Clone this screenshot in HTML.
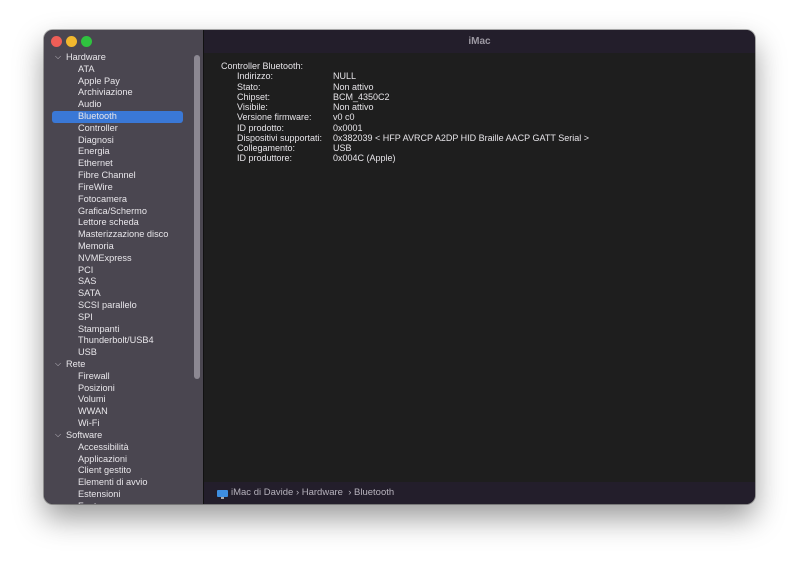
<!DOCTYPE html>
<html><head><meta charset="utf-8"><style>
*{margin:0;padding:0;box-sizing:border-box}
body{width:800px;height:563px;background:#fff;position:relative;overflow:hidden;font-family:"Liberation Sans",sans-serif;}
.win{position:absolute;left:44px;top:30px;width:711px;height:474px;border-radius:9px;overflow:hidden;background:#1e1e1e;box-shadow:0 14px 30px rgba(0,0,0,.4),0 0 0 1px rgba(0,0,0,.3);}
.side{position:absolute;left:0;top:0;width:159px;height:474px;background:#4a4650;}
.title{position:absolute;left:159px;top:0;right:0;height:23px;background:#231e2b;color:#9c98a2;font-size:10px;font-weight:bold;text-align:center;line-height:23px;border-left:1px solid #111;}
.main{position:absolute;left:159px;top:23px;right:0;bottom:22px;background:#1e1e1e;border-left:1px solid #111;}
.foot{position:absolute;left:159px;bottom:0;right:0;height:22px;background:#231e2b;border-left:1px solid #111;color:#b6b2bc;font-size:9.5px;line-height:22px;padding-left:27px;}
.dot{position:absolute;top:6px;width:11px;height:11px;border-radius:50%}
.it{position:absolute;left:34px;font-size:9.2px;color:#e8e6ea;height:12px;line-height:12px;white-space:nowrap}
.hd{left:22px}
.chev{position:absolute;left:11px;font-size:8px;color:#c8c4cc}
.sel{position:absolute;left:8px;top:81px;width:131px;height:12px;background:#3a78d6;border-radius:3px}
.sb{position:absolute;left:150px;top:25px;width:6px;height:324px;background:#8c8892;border-radius:3px}
.r{position:absolute;font-size:9px;color:#e6e4e8;white-space:nowrap;line-height:10px}
</style></head><body>
<div class="win">
<div class="side">
<div class="dot" style="left:7px;background:#ee5e57"></div>
<div class="dot" style="left:22px;background:#f2b82e"></div>
<div class="dot" style="left:37px;background:#2fc23f"></div>
<div class="sel"></div>
<div class="sb"></div>
<div id="list"></div>
</div>
<div class="title">iMac</div>
<div class="main"></div>
<div class="foot"><span style="position:absolute;left:13px;top:8px;width:11px;height:7px;background:#3e8ee0;border-radius:1px"></span><span style="position:absolute;left:17px;top:15px;width:3px;height:2px;background:#aaa"></span>iMac di Davide › Hardware &nbsp;› Bluetooth</div>
</div>
<div id="rows"></div>
<script>
var items=["*Hardware","ATA","Apple Pay","Archiviazione","Audio","Bluetooth","Controller","Diagnosi","Energia","Ethernet","Fibre Channel","FireWire","Fotocamera","Grafica/Schermo","Lettore scheda","Masterizzazione disco","Memoria","NVMExpress","PCI","SAS","SATA","SCSI parallelo","SPI","Stampanti","Thunderbolt/USB4","USB","*Rete","Firewall","Posizioni","Volumi","WWAN","Wi-Fi","*Software","Accessibilità","Applicazioni","Client gestito","Elementi di avvio","Estensioni","Font"];
var h="";items.forEach(function(t,i){var y=21+i*11.81;if(t[0]=="*"){h+='<div class="chev" style="top:'+(y+1)+'px">⌵</div><div class="it hd" style="top:'+y+'px">'+t.slice(1)+'</div>';}else h+='<div class="it" style="top:'+y+'px">'+t+'</div>';});
document.getElementById("list").innerHTML=h;
var rows=[["Controller Bluetooth:",""],["Indirizzo:","NULL"],["Stato:","Non attivo"],["Chipset:","BCM_4350C2"],["Visibile:","Non attivo"],["Versione firmware:","v0 c0"],["ID prodotto:","0x0001"],["Dispositivi supportati:","0x382039 &lt; HFP AVRCP A2DP HID Braille AACP GATT Serial &gt;"],["Collegamento:","USB"],["ID produttore:","0x004C (Apple)"]];
var r="";rows.forEach(function(a,i){var y=61+i*10.25;r+='<div class="r" style="left:'+(i?237:221)+'px;top:'+y+'px">'+a[0]+'</div>';if(a[1])r+='<div class="r" style="left:333px;top:'+y+'px">'+a[1]+'</div>';});
document.getElementById("rows").innerHTML=r;
</script>
</body></html>
